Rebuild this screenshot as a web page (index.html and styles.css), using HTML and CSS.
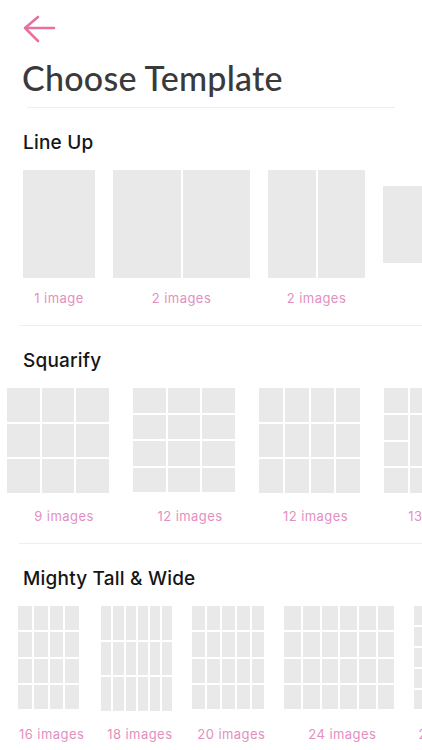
FILE: index.html
```html
<!DOCTYPE html>
<html lang="en">
<head>
  <meta charset="UTF-8" />
  <meta name="viewport" content="width=device-width, initial-scale=1.0"/>
  <title>Choose Template</title>
  <link rel="stylesheet" href="styles.css">
</head>
<body>

  <header class="top">
    <a class="back" href="#" aria-label="Back">
      <svg width="34" height="30" viewBox="0 0 34 30">
        <path d="M31 14H2M15 3L2 14l13 13" fill="none" stroke="#e8729f" stroke-width="2.6" stroke-linecap="round" stroke-linejoin="round"/>
      </svg>
    </a>
    <h1 class="title">Choose Template</h1>
    <div class="rule"></div>
  </header>

  <!-- Line Up -->
  <section class="group">
    <h2>Line Up</h2>
    <div class="strip lineup">
      <div class="item"><div class="frame"><div class="tile" data-grid="1x1" data-size="72x108"></div></div><p>1 image</p></div>
      <div class="item"><div class="frame"><div class="tile" data-grid="2x1" data-size="137x108"></div></div><p>2 images</p></div>
      <div class="item"><div class="frame"><div class="tile" data-grid="2x1" data-size="97x108"></div></div><p>2 images</p></div>
      <div class="item"><div class="frame"><div class="tile" data-grid="1x1" data-size="150x77"></div></div><p>1 image</p></div>
    </div>
  </section>

  <hr class="divider">

  <!-- Squarify -->
  <section class="group">
    <h2>Squarify</h2>
    <div class="strip squarify">
      <div class="item"><div class="frame"><div class="tile" data-grid="3x3" data-size="102x105"></div></div><p>9 images</p></div>
      <div class="item"><div class="frame"><div class="tile" data-grid="3x4" data-size="102x104"></div></div><p>12 images</p></div>
      <div class="item"><div class="frame"><div class="tile" data-grid="4x3" data-size="101x105"></div></div><p>12 images</p></div>
      <div class="item"><div class="frame"><div class="tile mosaic" data-grid="4x4" data-count="13" data-size="102x105"></div></div><p>13 images</p></div>
    </div>
  </section>

  <hr class="divider">

  <!-- Mighty Tall & Wide -->
  <section class="group">
    <h2>Mighty Tall &amp; Wide</h2>
    <div class="strip tall">
      <div class="item"><div class="frame"><div class="tile" data-grid="4x4" data-size="61x103"></div></div><p>16 images</p></div>
      <div class="item"><div class="frame"><div class="tile" data-grid="6x3" data-size="71x105"></div></div><p>18 images</p></div>
      <div class="item"><div class="frame"><div class="tile" data-grid="5x4" data-size="72x103"></div></div><p>20 images</p></div>
      <div class="item"><div class="frame"><div class="tile" data-grid="6x4" data-size="110x103"></div></div><p>24 images</p></div>
      <div class="item"><div class="frame"><div class="tile" data-grid="5x5" data-size="70x103"></div></div><p>25 images</p></div>
    </div>
  </section>

  <script>
    // build the little preview grids from their data attributes
    document.querySelectorAll(".tile").forEach((tile) => {
      const [cols, rows] = tile.dataset.grid.split("x").map(Number);
      const [w, h] = tile.dataset.size.split("x");
      const count = Number(tile.dataset.count) || cols * rows;

      tile.style.width = w + "px";
      tile.style.height = h + "px";
      tile.style.gridTemplateColumns = "repeat(" + cols + ", 1fr)";
      tile.style.gridTemplateRows = "repeat(" + rows + ", 1fr)";

      for (let i = 0; i < count; i++) {
        tile.appendChild(document.createElement("span"));
      }
    });
  </script>
</body>
</html>
```

FILE: styles.css
```css
body {
  margin: 0;
  padding: 0;
  width: 422px;
  overflow: hidden;
  background: #fff;
  font-family: Inter, 'Noto Sans', sans-serif;
}

/* Header */
.top {
  padding: 14px 0 0 22px;
}

.back {
  display: block;
  width: 34px;
  margin-left: 1px;
}

.back svg {
  display: block;
}

.title {
  margin: 14px 0 0;
  font-family: Lato, sans-serif;
  font-weight: 500;
  font-size: 34px;
  line-height: 40px;
  color: #3a3a3a;
  letter-spacing: 0.25px;
}

.rule {
  margin: 9px 0 0 5px;
  width: 368px;
  height: 1px;
  background: #eeeeee;
}

/* Template groups */
.group {
  padding-top: 23px;
}

.group h2 {
  margin: 0 0 0 23px;
  font-weight: 500;
  font-size: 19px;
  line-height: 24px;
  color: #151515;
  letter-spacing: 0.2px;
}

.strip {
  display: flex;
  margin-top: 15px;
}

.strip.lineup {
  padding-left: 23px;
  gap: 18px;
}

.strip.squarify {
  padding-left: 7px;
  gap: 24px;
}

.strip.tall {
  padding-left: 16px;
  gap: 20px;
}

.item {
  flex-shrink: 0;
  display: flex;
  flex-direction: column;
  align-items: center;
}

.frame {
  height: 108px;
  display: flex;
  align-items: flex-start;
  justify-content: center;
}

.strip.lineup .frame {
  align-items: center;
}

.tile {
  display: grid;
  gap: 2px;
  background: #fff;
}

.tile span {
  background: #e9e9e9;
}

/* 13 image mosaic: a few cells run over two rows */
.mosaic {
  grid-auto-flow: column;
}

.mosaic span:nth-child(6),
.mosaic span:nth-child(8),
.mosaic span:nth-child(13) {
  grid-row: span 2;
}

.item p {
  margin: 12px 0 0;
  font-size: 13px;
  line-height: 16px;
  color: #e38fbf;
  letter-spacing: 0.45px;
  white-space: nowrap;
  text-align: center;
}

/* captions sit a little right of the preview centre */
.strip.squarify .item p {
  margin-left: 6px;
  margin-right: -6px;
}

.strip.tall .item p {
  margin-left: 3px;
  margin-right: -3px;
}

.divider {
  margin: 19px 0 0 19px;
  border: none;
  height: 1px;
  background: #eeeeee;
}
```
